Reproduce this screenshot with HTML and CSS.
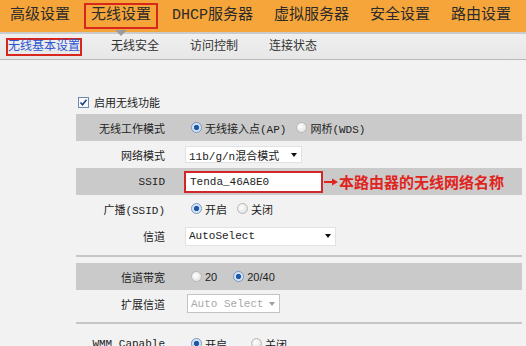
FILE: index.html
```html
<!DOCTYPE html>
<html lang="zh-CN">

<head>
    <meta charset="UTF-8">
    <meta name="viewport" content="width=device-width, initial-scale=1.0">
    <title>无线基本设置</title>
    <link rel="stylesheet" href="styles.css">
</head>

<body>
    <div class="topnav">
        <a class="nav-item">高级设置</a>
        <a class="nav-item active">无线设置</a>
        <a class="nav-item">DHCP服务器</a>
        <a class="nav-item">虚拟服务器</a>
        <a class="nav-item">安全设置</a>
        <a class="nav-item">路由设置</a>
    </div>

    <div class="subnav">
        <a class="sub-item active">无线基本设置</a>
        <a class="sub-item">无线安全</a>
        <a class="sub-item">访问控制</a>
        <a class="sub-item">连接状态</a>
    </div>

    <div class="content">
        <div class="enable">
            <svg class="checkbox" viewBox="0 0 11 11">
                <rect x="0.5" y="0.5" width="10" height="10" fill="#f7f9fc" stroke="#6f86ad" />
                <path d="M2.5 5.5 L4.5 7.8 L8.5 2.8" fill="none" stroke="#1d3d78" stroke-width="1.5" />
            </svg>
            <span>启用无线功能</span>
        </div>

        <div class="section">
            <div class="row dark">
                <div class="label">无线工作模式</div>
                <div class="value">
                    <span class="option"><span class="radio on"></span>无线接入点(AP)</span>
                    <span class="option"><span class="radio"></span>网桥(WDS)</span>
                </div>
            </div>
            <div class="row">
                <div class="label">网络模式</div>
                <div class="value">
                    <div class="select mode">11b/g/n混合模式<span class="arrow"></span></div>
                </div>
            </div>
            <div class="row dark">
                <div class="label">SSID</div>
                <div class="value">
                    <div class="ssid">Tenda_46A8E0</div>
                    <svg class="pointer" viewBox="0 0 14 8">
                        <path d="M0 4 H8" stroke="#e0241d" stroke-width="2" />
                        <path d="M8 0.5 L14 4 L8 7.5 Z" fill="#e0241d" />
                    </svg>
                    <span class="note">本路由器的无线网络名称</span>
                </div>
            </div>
            <div class="row">
                <div class="label">广播(SSID)</div>
                <div class="value">
                    <span class="option"><span class="radio on"></span>开启</span>
                    <span class="option"><span class="radio"></span>关闭</span>
                </div>
            </div>
            <div class="row tall">
                <div class="label">信道</div>
                <div class="value">
                    <div class="select channel">AutoSelect<span class="arrow"></span></div>
                </div>
            </div>
        </div>

        <div class="separator"></div>

        <div class="section">
            <div class="row dark">
                <div class="label">信道带宽</div>
                <div class="value">
                    <span class="option num"><span class="radio"></span>20</span>
                    <span class="option num"><span class="radio on"></span>20/40</span>
                </div>
            </div>
            <div class="row">
                <div class="label">扩展信道</div>
                <div class="value">
                    <div class="select ext disabled">Auto Select<span class="arrow"></span></div>
                </div>
            </div>
        </div>

        <div class="separator"></div>

        <div class="section">
            <div class="row">
                <div class="label">WMM Capable</div>
                <div class="value">
                    <span class="option wide"><span class="radio on"></span>开启</span>
                    <span class="option"><span class="radio"></span>关闭</span>
                </div>
            </div>
        </div>
    </div>
</body>

</html>
```

FILE: styles.css
```css
body {
    margin: 0;
    background-color: #f2f2f2;
    font-family: "Liberation Mono", "Noto Sans CJK SC", monospace;
    color: #222;
    overflow: hidden;
}

/* top orange menu */
.topnav {
    position: relative;
    z-index: 2;
    display: flex;
    align-items: center;
    gap: 7px;
    height: 32px;
    padding-left: 3px;
    background-color: #f6a53a;
}

.nav-item {
    position: relative;
    padding: 0 5px;
    height: 22px;
    line-height: 22px;
    border: 2px solid transparent;
    font-size: 15px;
    color: #2b2b2b;
}

.nav-item.active {
    border-color: #d8261d;
}

.nav-item.active::after {
    content: "";
    position: absolute;
    left: 50%;
    top: 25px;
    margin-left: -6px;
    border-left: 6px solid transparent;
    border-right: 6px solid transparent;
    border-top: 6px solid #9c9c9c;
}

/* second level menu */
.subnav {
    display: flex;
    align-items: center;
    gap: 27px;
    height: 25px;
    padding-left: 6px;
    border-top: 2px solid #cbcbcb;
    border-bottom: 1px solid #b9b9b9;
    background: linear-gradient(#efefef, #e7e7e7);
}

.sub-item {
    border: 2px solid transparent;
    line-height: 14px;
    font-size: 12px;
    color: #333;
}

.sub-item.active {
    border-color: #d8261d;
    color: #2e55d4;
}

/* form area */
.content {
    padding: 35px 4px 0 76px;
}

.enable {
    display: flex;
    align-items: center;
    gap: 5px;
    height: 14px;
    margin-bottom: 5px;
    padding-left: 2px;
    font-size: 11px;
}

.checkbox {
    width: 11px;
    height: 11px;
}

.row {
    display: grid;
    grid-template-columns: 99px 1fr;
    align-items: center;
    height: 27px;
    font-size: 11px;
}

.row.tall {
    height: 28px;
}

.row.dark {
    background-color: #cacaca;
}

.label {
    padding-right: 10px;
    text-align: right;
}

.value {
    display: flex;
    align-items: center;
    padding-left: 10px;
}

.option {
    display: flex;
    align-items: center;
    gap: 3px;
    margin-left: 6px;
    margin-right: 4px;
}

.option.wide {
    margin-right: 18px;
}

.option.num {
    font-family: "Liberation Sans", Arial, sans-serif;
    margin-right: 10px;
}

.radio {
    width: 11px;
    height: 11px;
    box-sizing: border-box;
    border-radius: 50%;
    border: 1px solid #b8b8b8;
    background: radial-gradient(circle at 40% 40%, #ffffff, #dadada);
}

.radio.on {
    border-color: #7396c4;
    background: radial-gradient(circle, #1c58a6 0, #1c58a6 2.2px, #cddff3 3px, #f1f6fc 100%);
}

.select {
    position: relative;
    box-sizing: border-box;
    display: flex;
    align-items: center;
    padding-left: 3px;
    background-color: #fff;
    border: 1px solid #e2e2e2;
    font-size: 11px;
}

.select.mode {
    width: 117px;
    height: 17px;
}

.select.channel {
    width: 151px;
    height: 19px;
}

.select.ext {
    width: 93px;
    height: 19px;
    margin-left: 2px;
    border-color: #c4c4c4;
    color: #a8a8a8;
}

.arrow {
    position: absolute;
    right: 4px;
    top: 50%;
    margin-top: -2px;
    border-left: 3px solid transparent;
    border-right: 3px solid transparent;
    border-top: 4px solid #111;
}

.select.disabled .arrow {
    border-top-color: #a0a0a0;
}

.ssid {
    box-sizing: border-box;
    width: 139px;
    height: 22px;
    line-height: 18px;
    padding-left: 4px;
    margin-left: -1px;
    background-color: #fff;
    border: 2px solid #d2272a;
    font-size: 11px;
}

.pointer {
    width: 14px;
    height: 8px;
    margin-left: 1px;
}

.note {
    margin-left: 1px;
    font-family: "Noto Sans CJK SC", sans-serif;
    font-size: 15px;
    font-weight: bold;
    color: #e0241d;
}

.separator {
    height: 2px;
    margin: 5px 0 6px;
    background-color: #c6c6c6;
}
```
